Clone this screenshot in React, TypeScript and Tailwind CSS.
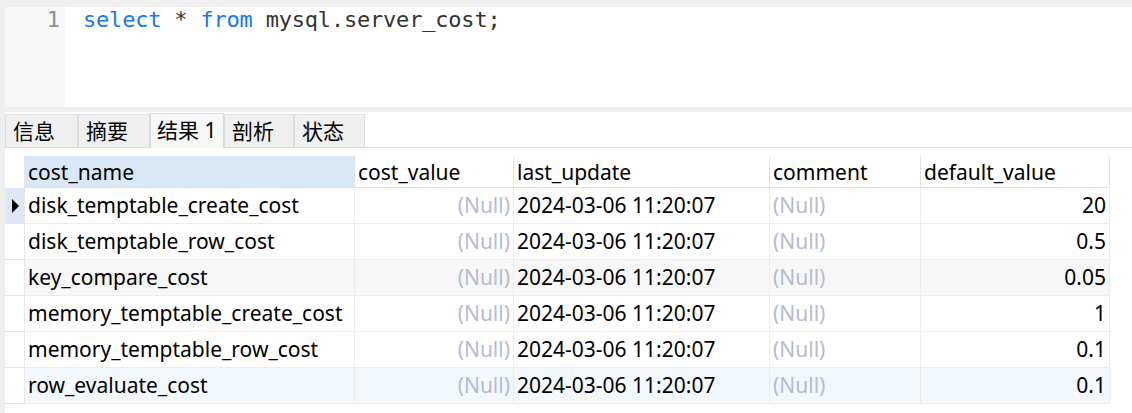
import React from "react";

const rows = [
  { name: "disk_temptable_create_cost", def: "20", bg: "bg-white", sel: true },
  { name: "disk_temptable_row_cost", def: "0.5", bg: "bg-white" },
  { name: "key_compare_cost", def: "0.05", bg: "bg-[#f7f7f7]" },
  { name: "memory_temptable_create_cost", def: "1", bg: "bg-white" },
  { name: "memory_temptable_row_cost", def: "0.1", bg: "bg-white" },
  { name: "row_evaluate_cost", def: "0.1", bg: "bg-[#f3f8fd]" },
];

const font = { fontFamily: '"Noto Sans", "Noto Sans CJK SC", sans-serif' };

export default function App() {
  return (
    <div className="w-[1132px] h-[413px] bg-[#efefef] overflow-hidden flex flex-col" style={font}>
      <div className="pt-[7px] pl-[5px]">
        <div className="flex h-[100px]">
          <div className="w-[60px] bg-[#f7f7f7] text-right pr-[5px] text-[22px] leading-[26px] text-[#8f8f8f]" style={{ fontFamily: '"DejaVu Sans Mono", monospace' }}>
            1
          </div>
          <div className="flex-1 bg-white pl-[18px] text-[22px] leading-[26px] text-[#333] whitespace-pre" style={{ fontFamily: '"DejaVu Sans Mono", monospace', letterSpacing: "-0.2px" }}>
            <span className="text-[#1677ee]">select</span> * <span className="text-[#1677ee]">from</span> mysql.server_cost;
          </div>
        </div>
      </div>
      <div className="h-[5px]" />
      <div className="flex-1 ml-[5px] bg-white flex flex-col">
        <div className="h-[36px] flex items-end border-b border-[#dcdcdc] pt-[1px]">
          {["信息", "摘要", "结果 1", "剖析", "状态"].map((t, i) =>
            i === 2 ? (
              <div key={t} className="h-[35px] w-[74px] bg-[#f7f7f7] border border-b-0 border-[#dcdcdc] pl-[6px] text-[21px] leading-[33px] text-black -mb-px whitespace-nowrap">
                {t}
              </div>
            ) : (
              <div key={t} className={`h-[33px] ${i === 0 ? "w-[73px]" : i === 1 ? "w-[72px]" : i === 3 ? "w-[70px]" : "w-[71px]"} bg-[#f0f0f0] border border-b-0 border-[#dcdcdc] pl-[7px] text-[21px] leading-[33px] text-black`}>
                {t}
              </div>
            )
          )}
        </div>
        <div className="pt-[8px]">
          <div className="grid grid-cols-[20px_330px_159px_256px_151px_189px] text-[21px] text-black">
            <div className="h-[32px] border-r border-[#e6e6e6]" />
            <div className="h-[32px] bg-[#d9e8f7] border-r border-b border-[#e0e0e0] pl-[3px] leading-[32px]">cost_name</div>
            <div className="h-[32px] border-r border-b border-[#e0e0e0] pl-[3px] leading-[32px]">cost_value</div>
            <div className="h-[32px] border-r border-b border-[#e0e0e0] pl-[3px] leading-[32px]">last_update</div>
            <div className="h-[32px] border-r border-b border-[#e0e0e0] pl-[3px] leading-[32px]">comment</div>
            <div className="h-[32px] border-r border-b border-[#e0e0e0] pl-[3px] leading-[32px]">default_value</div>
            {rows.map((r) => (
              <React.Fragment key={r.name}>
                <div className={`h-[36px] border-r border-b border-[#e6e6e6] flex items-center justify-center ${r.sel ? "bg-[#dce8f5]" : "bg-white"}`}>
                  {r.sel && (
                    <svg width="8" height="14" viewBox="0 0 8 14">
                      <path d="M1 0 L8 7 L1 14 Z" fill="#000" />
                    </svg>
                  )}
                </div>
                <div className={`h-[36px] ${r.bg} border-r border-b border-[#ececec] pl-[3px] leading-[35px] whitespace-nowrap`}>{r.name}</div>
                <div className={`h-[36px] ${r.bg} border-r border-b border-[#ececec] pr-[3px] leading-[35px] text-right text-[#b5bcd3]`}>(Null)</div>
                <div className={`h-[36px] ${r.bg} border-r border-b border-[#ececec] pl-[3px] leading-[35px]`}>2024-03-06 11:20:07</div>
                <div className={`h-[36px] ${r.bg} border-r border-b border-[#ececec] pl-[3px] leading-[35px] text-[#b5bcd3]`}>(Null)</div>
                <div className={`h-[36px] ${r.bg} border-r border-b border-[#ececec] pr-[3px] leading-[35px] text-right`}>{r.def}</div>
              </React.Fragment>
            ))}
          </div>
        </div>
      </div>
    </div>
  );
}
